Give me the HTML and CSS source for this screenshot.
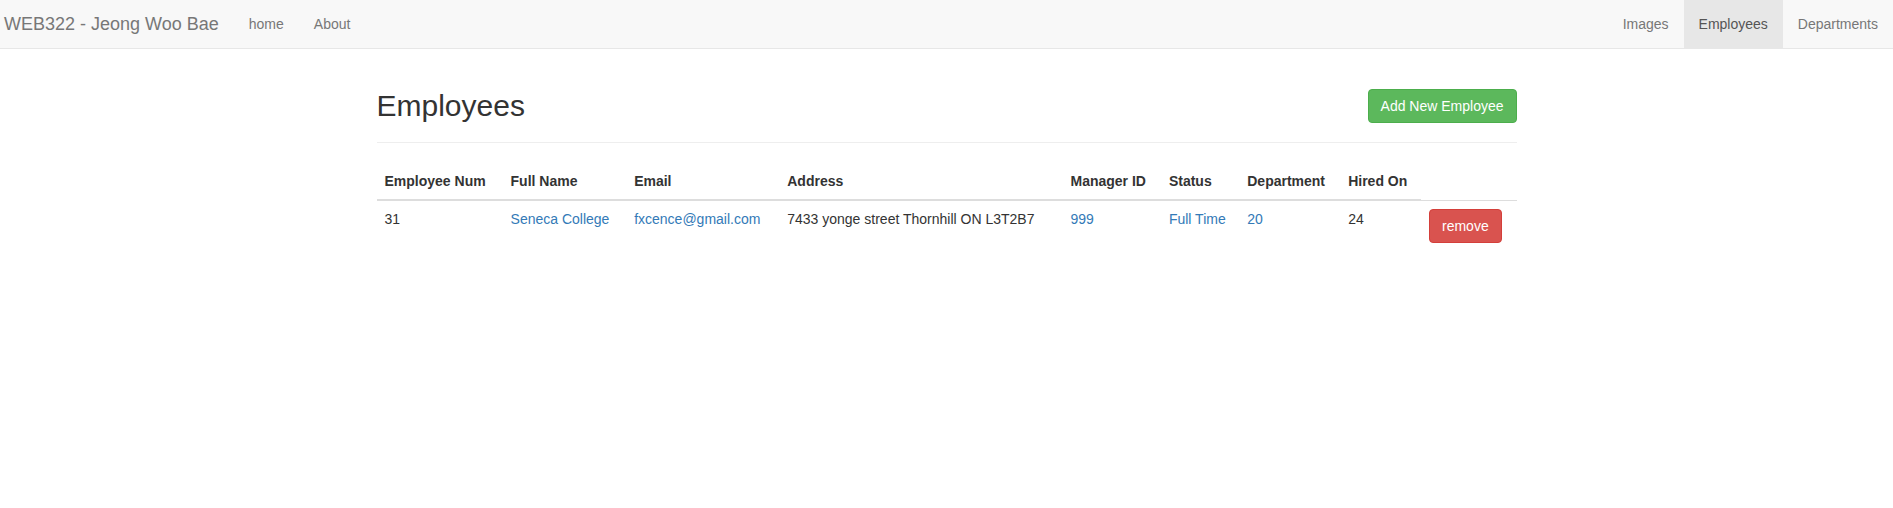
FILE: index.html
```html
<!DOCTYPE html>
<html lang="en">
<head>
<meta charset="utf-8">
<title>Employees</title>
<link rel="stylesheet" href="styles.css">
</head>
<body>
<nav class="navbar">
  <div class="navbar-left">
    <a class="brand" href="#">WEB322 - Jeong Woo Bae</a>
    <ul class="nav">
      <li><a href="#">home</a></li>
      <li><a href="#">About</a></li>
    </ul>
  </div>
  <ul class="nav">
    <li><a href="#">Images</a></li>
    <li class="active"><a href="#">Employees</a></li>
    <li><a href="#">Departments</a></li>
  </ul>
</nav>
<main class="container">
  <div class="page-header">
    <h2>Employees</h2>
    <a class="btn btn-success" href="#">Add New Employee</a>
  </div>
  <table class="table">
    <thead>
      <tr>
        <th>Employee Num</th>
        <th>Full Name</th>
        <th>Email</th>
        <th>Address</th>
        <th>Manager ID</th>
        <th>Status</th>
        <th>Department</th>
        <th>Hired On</th>
      </tr>
    </thead>
    <tbody>
      <tr>
        <td>31</td>
        <td><a href="#">Seneca College</a></td>
        <td><a href="#">fxcence@gmail.com</a></td>
        <td>7433 yonge street Thornhill ON L3T2B7</td>
        <td><a href="#">999</a></td>
        <td><a href="#">Full Time</a></td>
        <td><a href="#">20</a></td>
        <td>24</td>
        <td><button class="btn btn-danger">remove</button></td>
      </tr>
    </tbody>
  </table>
</main>
</body>
</html>
```

FILE: styles.css
```css
* { box-sizing: border-box; }
html, body { margin: 0; padding: 0; }
body {
  font-family: "Liberation Sans", Arial, Helvetica, sans-serif;
  font-size: 14px;
  line-height: 20px;
  color: #333;
  background: #fff;
}
a { color: #337ab7; text-decoration: none; }

.navbar {
  display: flex;
  justify-content: space-between;
  height: 49px;
  background: #f8f8f8;
  border-bottom: 1px solid #e7e7e7;
}
.navbar-left { display: flex; }
.brand {
  display: block;
  padding: 14px 15px 0 4px;
  font-size: 18px;
  line-height: 20px;
  color: #777;
}
.nav {
  display: flex;
  list-style: none;
  margin: 0;
  padding: 0;
}
.nav a {
  display: block;
  padding: 14px 15px;
  line-height: 20px;
  color: #777;
}
.nav .active a {
  background: #e7e7e7;
  color: #555;
}

.container {
  width: 1140px;
  margin: 0 auto;
}
.page-header {
  display: flex;
  justify-content: space-between;
  align-items: flex-start;
  margin: 40px 0 20px;
  padding-bottom: 10px;
  border-bottom: 1px solid #eee;
}
.page-header h2 {
  margin: 0 0 10px;
  font-size: 30px;
  font-weight: 500;
  line-height: 33px;
}

.btn {
  display: inline-block;
  padding: 6px 12px;
  font-family: inherit;
  font-size: 14px;
  line-height: 20px;
  border: 1px solid transparent;
  border-radius: 4px;
  color: #fff;
  cursor: pointer;
}
.btn-success { background: #5cb85c; border-color: #4cae4c; }
.btn-danger { background: #d9534f; border-color: #d43f3a; }

.table {
  width: 100%;
  border-collapse: collapse;
  border-spacing: 0;
}
.table th,
.table td {
  padding: 8px;
  text-align: left;
  vertical-align: top;
  line-height: 20px;
}
.table th {
  font-weight: bold;
  vertical-align: bottom;
  border-bottom: 2px solid #ddd;
}
.table td {
  border-top: 1px solid #ddd;
}
```
